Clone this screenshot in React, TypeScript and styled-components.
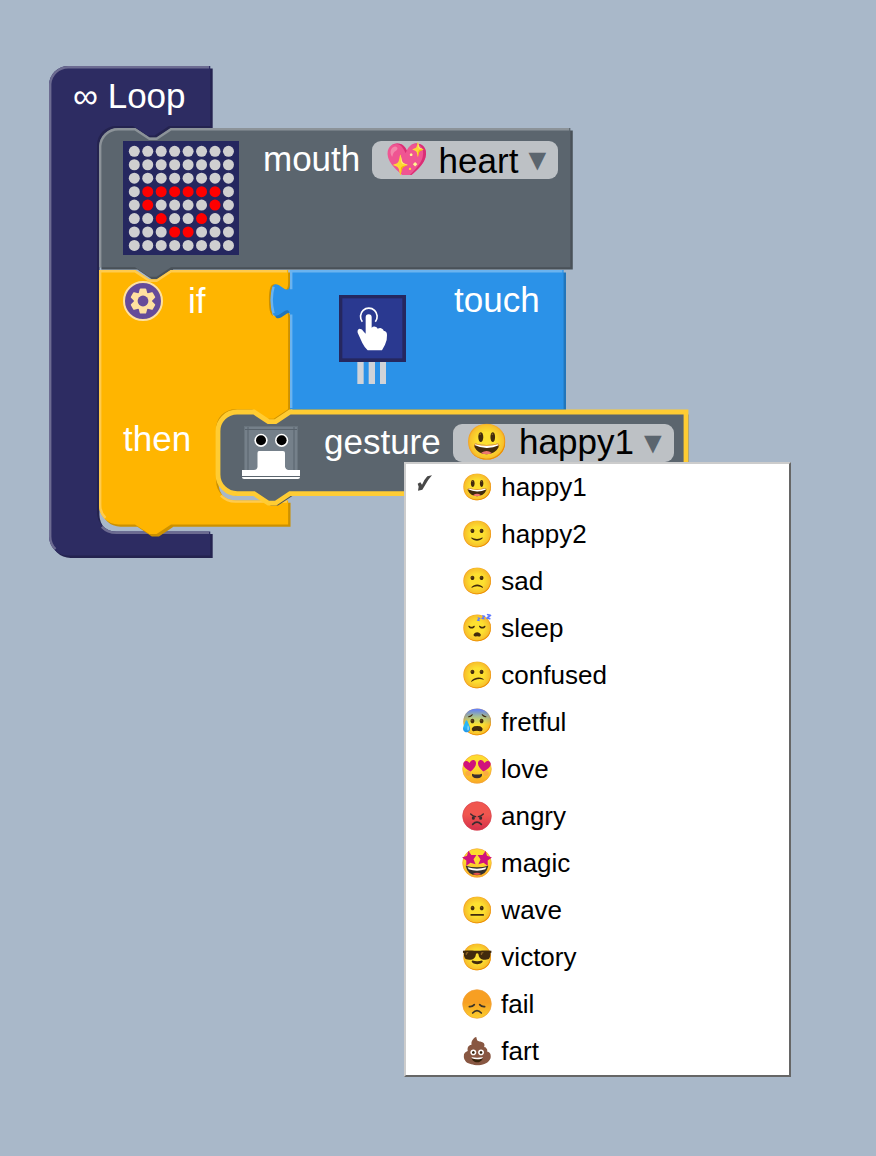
import React, { useState } from 'react';
import styled, { createGlobalStyle } from 'styled-components';

const GlobalStyle = createGlobalStyle`
  *, *::before, *::after { box-sizing: border-box; }
  html, body { margin: 0; min-height: 100%; background: #a9b8c9; }
  body { font-family: "Liberation Sans", Arial, "Noto Color Emoji", sans-serif; }
`;

/* Block outlines are written in workspace units; the workspace is zoomed in. */
const ZOOM = 2.4;

const palette = {
  loop: { main: '#2d2c62', dark: '#24234f', light: '#6c6b91' },
  display: { main: '#5b656e', dark: '#495158', light: '#8c9399' },
  logic: { main: '#ffb500', dark: '#cc9100', light: '#ffcb4d' },
  sensor: { main: '#2b92e8', dark: '#2275ba', light: '#6bb3ef' },
};
type Tone = keyof typeof palette;

const Workspace = styled.main`
  position: relative;
  min-height: 100vh;
  overflow: hidden;
`;

const Script = styled.div`
  position: absolute;
  left: 49px;
  top: 66px;
`;

const Block = styled.section`
  position: relative;
  isolation: isolate;
  width: max-content;
`;

const Outline = styled.svg`
  position: absolute;
  z-index: -1;
  left: 0;
  top: 0;
  width: 1px;
  height: 1px;
  overflow: visible;
`;

const Stack = styled.div<{ $indent: number }>`
  display: flex;
  flex-direction: column;
  padding-left: ${(p) => p.$indent}px;
`;

const Row = styled.div<{ $height: number; $top?: number }>`
  display: flex;
  align-items: flex-start;
  height: ${(p) => p.$height}px;
  padding: ${(p) => p.$top ?? 12}px 14px 0 24px;
`;

const Label = styled.span`
  color: #fff;
  font-size: 35px;
  line-height: 36px;
  white-space: pre;
`;

const NameLabel = styled.label`
  color: #fff;
  font-size: 35px;
  line-height: 36px;
  padding-left: 24px;
  padding-right: 12px;
`;

const LogicLayout = styled.div`
  display: grid;
  grid-template-columns: 119px max-content;
  grid-template-rows: 142px 112px;
`;

const Condition = styled.div`
  grid-column: 1 / -1;
  display: flex;
`;

const ConditionHead = styled.div`
  display: flex;
  align-items: center;
  width: 191px;
  height: 62px;
  padding-left: 24px;
  gap: 25px;
`;

const ThenHead = styled.div`
  padding: 9px 0 0 24px;
`;

const MutatorButton = styled.button`
  display: block;
  width: 40px;
  height: 40px;
  padding: 0;
  border: 0;
  background: none;
`;

const SensorRow = styled.div`
  display: flex;
  align-items: flex-start;
  height: 142px;
  padding: 12px 24px 0 49px;
  gap: 48px;
`;

const SensorArt = styled.svg`
  display: block;
  width: 67px;
  height: 89px;
  margin-top: 13px;
`;

const MatrixArt = styled.svg`
  display: block;
  width: 116px;
  height: 114px;
`;

const RobotArt = styled.svg`
  display: block;
  width: 58px;
  height: 53px;
  margin-top: 2px;
`;

const Field = styled.div`
  position: relative;
  display: flex;
  height: 38px;
  border-radius: 9px;
  background: #bdc1c5;
`;

const Arrow = styled.span`
  color: #5b656e;
  font-size: 30px;
  line-height: 38px;
`;

const FieldSelect = styled.select`
  appearance: none;
  height: 34px;
  padding: 0 39px 0 13px;
  border: 0;
  background: none;
  color: #000;
  font: 35px "Liberation Sans", Arial, "Noto Color Emoji", sans-serif;
`;

const SelectArrow = styled(Arrow)`
  position: absolute;
  right: 6px;
  top: 0;
  pointer-events: none;
`;

const FieldButton = styled.button`
  display: flex;
  align-items: flex-start;
  gap: 4px;
  height: 38px;
  padding: 0 6px 0 13px;
  border: 0;
  background: none;
  color: #000;
  font: 35px/36px "Liberation Sans", Arial, "Noto Color Emoji", sans-serif;
  white-space: nowrap;
`;

const Menu = styled.ul`
  position: absolute;
  z-index: 2;
  left: -49px;
  top: 38px;
  width: 387px;
  margin: 0;
  padding: 0;
  list-style: none;
  background: #fff;
  border: 2px solid;
  border-color: #ccc #666 #666 #ccc;
`;

const MenuItem = styled.li`
  position: relative;
  height: 47px;
  padding-left: 56px;
  font-size: 26px;
  line-height: 47px;
  color: #000;
  white-space: nowrap;
  cursor: pointer;
`;

const CheckMark = styled.svg`
  position: absolute;
  left: 11px;
  top: 11px;
  width: 16px;
  height: 16px;
`;

const FaceArt = styled.svg`
  display: inline-block;
  width: 32px;
  height: 32px;
  vertical-align: -7px;
`;

function BlockOutline({ tone, path, light, selected }: { tone: Tone; path: string; light: string; selected?: boolean }) {
  const c = palette[tone];
  return (
    <Outline aria-hidden="true">
      <g transform={`scale(${ZOOM})`}>
        <path d={path} fill={c.dark} transform="translate(1,1)" />
        <path d={path} fill={c.main} stroke={selected ? '#ffcc33' : 'none'} strokeWidth={2} />
        {!selected && <path d={light} fill="none" stroke={c.light} strokeWidth={1} />}
      </g>
    </Outline>
  );
}

const NOTCH = 'l 6,4 3,0 6,-4';
const NOTCH_BACK = 'l -6,4 -3,0 -6,-4';
const TOP = `M 0,8 A 8,8 0 0,1 8,0 H 15 ${NOTCH}`;
const SOCKET = 'v 5 c 0,10 -8,-8 -8,7.5 s 8,-2.5 8,7.5';

const roundedLeftLight = (h: number) => `M 2.7,${h - 2.7} A 7.5,7.5 0 0,1 0.5,${h - 8}`;
const mouthOf = (edge: number, bottom: number) =>
  `H ${edge + 30} ${NOTCH_BACK} h -7 a 8,8 0 0,0 -8,8 V ${bottom - 8} a 8,8 0 0,0 8,8`;
const mouthLight = (edge: number, bottom: number, w: number) =>
  `M ${edge + 2},${bottom - 2} a 8.5,8.5 0 0,0 6,2.5 H ${w - 0.5}`;

const loopPath = `M 0,8 A 8,8 0 0,1 8,0 H 67.2 V 25 ${mouthOf(20, 194)} H 67.2 V 204 H 8 A 8,8 0 0,1 0,196 Z`;
const loopLight = `M 0.5,7.5 A 7.5,7.5 0 0,1 8,0.5 H 66.7 ${roundedLeftLight(204)} V 7.5 ${mouthLight(20, 194, 67.2)}`;

const displayPath = `${TOP} H 196.4 V 58 H 30 ${NOTCH_BACK} H 0 Z`;
const displayLight = `M 0.5,58 V 7.5 A 7.5,7.5 0 0,1 8,0.5 H 15 ${NOTCH} H 195.9`;

const logicPath = `M 0,0 H 15 ${NOTCH} H 78.8 ${SOCKET} V 58 ${mouthOf(48.8, 96)} H 78.8 V 106 H 30 ${NOTCH_BACK} H 8 A 8,8 0 0,1 0,98 Z`;
const logicLight = `${roundedLeftLight(106)} V 0.5 H 15 ${NOTCH} H 78.3 ${mouthLight(48.8, 96, 78.8)}`;

const sensorPath = 'M 0,0 H 114 V 58 H 0 V 20 c 0,-10 -8,8 -8,-7.5 s 8,2.5 8,-7.5 Z';
const sensorLight = 'M 0.5,57.5 V 18.5 m -7.36,-0.5 q -1.52,-5.5 0,-11 m 7.36,1 V 0.5 H 113.5';

const gesturePath = `${TOP} H 195 V 34 H 30 ${NOTCH_BACK} H 8 A 8,8 0 0,1 0,26 Z`;

const ledPattern = [
  '........', '........', '........', '.######.', '.#....#.', '..#..#..', '...##...', '........',
];

function LedMatrix() {
  return (
    <MatrixArt viewBox="0 0 116 114" role="img" aria-label="LED matrix">
      <rect width="116" height="114" fill="#25275f" />
      {ledPattern.map((line, y) =>
        line.split('').map((dot, x) => (
          <circle key={`${x}-${y}`} cx={11.3 + 13.45 * x} cy={10.3 + 13.45 * y} r="5.5" fill={dot === '#' ? '#ff0000' : '#cfcfd0'} />
        )),
      )}
    </MatrixArt>
  );
}

function Gear() {
  return (
    <svg width="40" height="40" viewBox="-20 -20 40 40" aria-hidden="true">
      <circle r="19" fill="#664b99" stroke="#ffe1a0" strokeWidth="2" />
      {[0, 60, 120, 180, 240, 300].map((a) => (
        <path key={a} transform={`rotate(${a})`} d="M -4.8,-6 L -3.2,-12 Q -3,-12.6 -2.4,-12.6 H 2.4 Q 3,-12.6 3.2,-12 L 4.8,-6 Z" fill="#ffe1a0" />
      ))}
      <circle r="9" fill="#ffe1a0" />
      <circle r="5.4" fill="#664b99" />
    </svg>
  );
}

function TouchSensor() {
  return (
    <SensorArt viewBox="237 105 201 267" role="img" aria-label="Touch sensor">
      <path d="M292,300 h19 v72 h-19 z M326,300 h19 v72 h-19 z M360,300 h18 v72 h-18 z" fill="#d0d3d8" />
      <rect x="237" y="105" width="201" height="201" fill="#25275f" />
      <rect x="247" y="115" width="180" height="180" fill="#2a3990" />
      <path d="M307,185 A 25,25 0 1 1 346,185" fill="none" stroke="#fff" strokeWidth="5" />
      <path
        d="M317,172 a 9,9 0 0 1 18,0 V 203 q 5,-5 11,-3 q 6,1 7,6 q 8,-4 13,0 q 4,2 5,6 q 10,1 10,13 q 1,15 -6,29 l -9,17 H 323 q -9,-8 -16,-22 l -14,-31 q -2,-11 6,-12 q 7,0 13,10 l 5,5 z"
        fill="#fff"
      />
    </SensorArt>
  );
}

function Robot() {
  return (
    <RobotArt viewBox="0 0 58 53" role="img" aria-label="Robot face">
      <rect x="2" y="0" width="54" height="44" fill="#75808a" />
      <path d="M2,3.5 H56 M6,0 V44 M52,0 V44" stroke="#59636c" fill="none" />
      <path d="M2.5,0 V44 M55.5,0 V44 M2,0.5 H56" stroke="#69747d" fill="none" />
      <circle cx="19" cy="14.3" r="6.6" fill="#fff" />
      <circle cx="39.6" cy="14.3" r="6.6" fill="#fff" />
      <circle cx="19" cy="14.3" r="5" fill="#000" />
      <circle cx="39.6" cy="14.3" r="5" fill="#000" />
      <path d="M17,25 H41 Q43,25 43,27 V41 Q44,44 46,44 H58 V50 H0 V44 H12 Q15,44 15.5,41 V27 Q15.5,25 17,25 Z" fill="#fff" />
      <path d="M0,51 H58 Q58,53 56,53 H2 Q0,53 0,51 Z" fill="#fff" />
    </RobotArt>
  );
}

type FaceKind = 'love' | 'angry' | 'magic' | 'fail';

const skin: Record<FaceKind, [string, string, string]> = {
  love: ['#fddc2f', '#f9a825', '#f2a23a'],
  angry: ['#f0564f', '#d42f4c', '#d6434f'],
  magic: ['#fddc2f', '#f9a825', '#f2a23a'],
  fail: ['#f79f22', '#fbd02f', '#f0a03c'],
};

const HEART = 'M 0,15 C -11,8 -19,0 -17,-9 C -15,-17 -5,-17 0,-8 C 5,-17 15,-17 17,-9 C 19,0 11,8 0,15 Z';
const STAR = 'M 0,-21 L 6,-8 L 20,-6 L 10,4 L 13,19 L 0,12 L -13,19 L -10,4 L -20,-6 L -6,-8 Z';

function Face({ kind }: { kind: FaceKind }) {
  const [top, bottom, rim] = skin[kind];
  return (
    <FaceArt viewBox="-45 -48 96 96" role="img" aria-label={kind}>
      <defs>
        <linearGradient id={`skin-${kind}`} x1="0" y1="0" x2="0" y2="1">
          <stop offset="0.45" stopColor={top} />
          <stop offset="1" stopColor={bottom} />
        </linearGradient>
      </defs>
      <circle r="43" fill={`url(#skin-${kind})`} stroke={rim} strokeWidth="2" />
      {kind === 'love' && (
        <>
          <circle cx="-27" cy="13" r="8" fill="#f9a04a" opacity="0.7" />
          <circle cx="27" cy="13" r="8" fill="#f9a04a" opacity="0.7" />
          <path d={HEART} transform="translate(-21,-9) rotate(-8) scale(1.1)" fill="#d0127c" />
          <path d={HEART} transform="translate(21,-9) rotate(8) scale(1.1)" fill="#d0127c" />
          <path d="M -15,14 Q 0,19 15,14 Q 17,27 0,28 Q -17,27 -15,14 Z" fill="#3a2f2f" />
        </>
      )}
      {kind === 'magic' && (
        <>
          <path d="M -34,8 Q 0,18 34,8 Q 28,37 0,37 Q -28,37 -34,8 Z" fill="#33302f" />
          <path d="M -28,13 Q 0,21 28,13 L 25,19 Q 0,27 -25,19 Z" fill="#fff" />
          <path d="M -13,33 Q 0,25 13,33 Q 0,39 -13,33 Z" fill="#e2504c" />
          <path d={STAR} transform="translate(-22,-14) rotate(-10) scale(1.1)" fill="#d0127c" />
          <path d={STAR} transform="translate(22,-14) rotate(10) scale(1.1)" fill="#d0127c" />
        </>
      )}
      {kind === 'angry' && (
        <g fill="none" stroke="#3a2c30" strokeLinecap="round">
          <path d="M -19,-6 Q -12,1 -4,2 M 19,-6 Q 12,1 4,2" strokeWidth="4" />
          <path d="M -11,5 v 2 M 11,5 v 2" strokeWidth="9" />
          <path d="M -13,25 Q 0,12 13,25" strokeWidth="5" />
        </g>
      )}
      {kind === 'fail' && (
        <g fill="none" stroke="#3d3428" strokeLinecap="round">
          <path d="M -23,8 Q -14,9 -8,2 M 23,8 Q 14,9 8,2" strokeWidth="5" />
          <path d="M -13,27 Q 0,13 13,27" strokeWidth="5" />
        </g>
      )}
    </FaceArt>
  );
}

interface Gesture {
  name: string;
  emoji?: string;
  face?: FaceKind;
}

const gestures: Gesture[] = [
  { name: 'happy1', emoji: '😃' },
  { name: 'happy2', emoji: '🙂' },
  { name: 'sad', emoji: '🙁' },
  { name: 'sleep', emoji: '😴' },
  { name: 'confused', emoji: '😕' },
  { name: 'fretful', emoji: '😰' },
  { name: 'love', face: 'love' },
  { name: 'angry', face: 'angry' },
  { name: 'magic', face: 'magic' },
  { name: 'wave', emoji: '😐' },
  { name: 'victory', emoji: '😎' },
  { name: 'fail', face: 'fail' },
  { name: 'fart', emoji: '💩' },
];

function GestureName({ gesture }: { gesture: Gesture }) {
  return (
    <span>
      {gesture.face ? <Face kind={gesture.face} /> : gesture.emoji} {gesture.name}
    </span>
  );
}

function GestureField() {
  const [value, setValue] = useState(gestures[0]);
  const [open, setOpen] = useState(true);
  return (
    <Field>
      <FieldButton
        type="button"
        aria-haspopup="listbox"
        aria-expanded={open}
        aria-labelledby="gesture-label"
        onClick={() => setOpen(!open)}
      >
        <GestureName gesture={value} />
        <Arrow aria-hidden="true">▼</Arrow>
      </FieldButton>
      {open && (
        <Menu role="listbox" aria-labelledby="gesture-label">
          {gestures.map((g) => (
            <MenuItem
              key={g.name}
              role="option"
              aria-selected={g === value}
              onClick={() => {
                setValue(g);
                setOpen(false);
              }}
            >
              {g === value && (
                <CheckMark viewBox="51 45 48 48" aria-hidden="true">
                  <path d="M53,71 L61,67 L66,74 Q 74,57 82,49 L96,46 Q 82,62 76,74 L67,89 L54,92 L56,80 Z" fill="#484848" />
                </CheckMark>
              )}
              <GestureName gesture={g} />
            </MenuItem>
          ))}
        </Menu>
      )}
    </Field>
  );
}

export default function App() {
  return (
    <>
      <GlobalStyle />
      <Workspace>
        <Script>
          <Block>
            <BlockOutline tone="loop" path={loopPath} light={loopLight} />
            <Row $height={62}>
              <Label>∞ Loop</Label>
            </Row>
            <Stack $indent={50}>
              <Block>
                <BlockOutline tone="display" path={displayPath} light={displayLight} />
                <Row $height={142} $top={13}>
                  <LedMatrix />
                  <NameLabel htmlFor="mouth-field">mouth</NameLabel>
                  <Field>
                    <FieldSelect id="mouth-field">
                      <option>💖 heart</option>
                    </FieldSelect>
                    <SelectArrow aria-hidden="true">▼</SelectArrow>
                  </Field>
                </Row>
              </Block>
              <Block>
                <BlockOutline tone="logic" path={logicPath} light={logicLight} />
                <LogicLayout>
                  <Condition>
                    <ConditionHead>
                      <MutatorButton type="button" aria-label="Edit conditions">
                        <Gear />
                      </MutatorButton>
                      <Label>if</Label>
                    </ConditionHead>
                    <Block>
                      <BlockOutline tone="sensor" path={sensorPath} light={sensorLight} />
                      <SensorRow>
                        <TouchSensor />
                        <Label>touch</Label>
                      </SensorRow>
                    </Block>
                  </Condition>
                  <ThenHead>
                    <Label>then</Label>
                  </ThenHead>
                  <Block>
                    <BlockOutline tone="display" path={gesturePath} light="" selected />
                    <Row $height={82}>
                      <Robot />
                      <NameLabel as="span" id="gesture-label">gesture</NameLabel>
                      <GestureField />
                    </Row>
                  </Block>
                </LogicLayout>
              </Block>
            </Stack>
          </Block>
        </Script>
      </Workspace>
    </>
  );
}
